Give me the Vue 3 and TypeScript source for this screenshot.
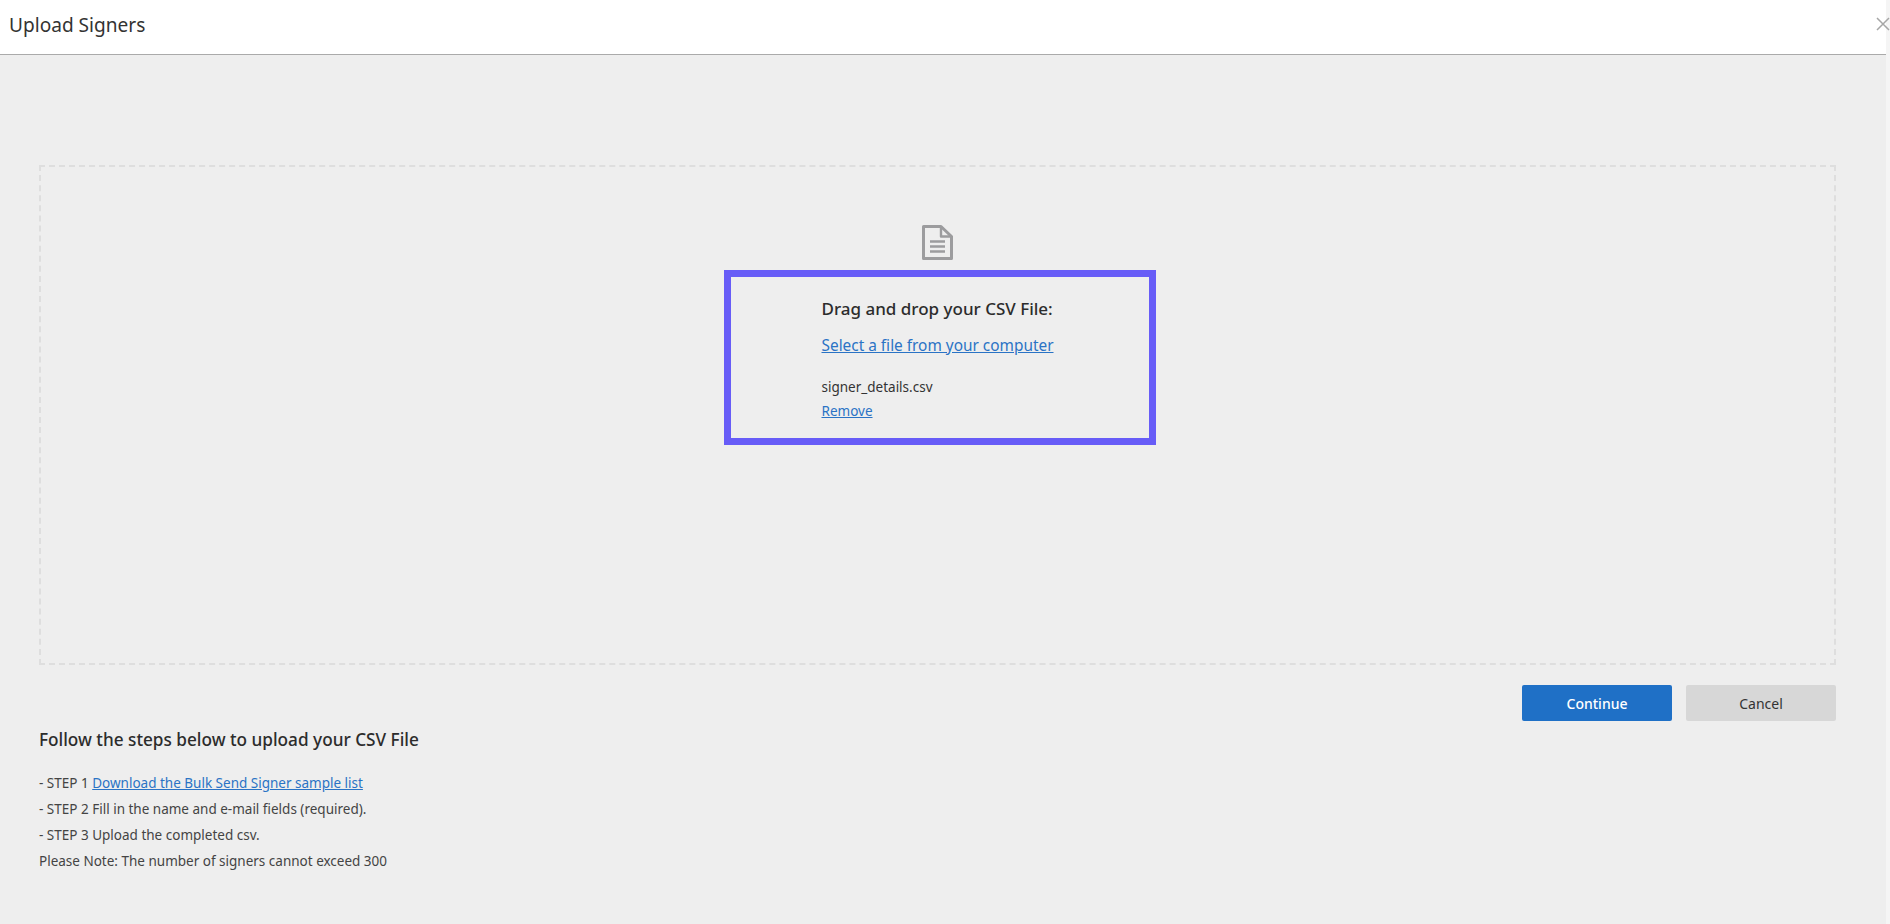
<script setup lang="ts">
const steps: string[] = [
  '- STEP 2 Fill in the name and e-mail fields (required).',
  '- STEP 3 Upload the completed csv.',
  'Please Note: The number of signers cannot exceed 300',
]
</script>

<template>
  <div class="page">
    <header class="header">
      <h1 class="title">Upload Signers</h1>
      <svg class="close" width="14" height="14" viewBox="0 0 14 14" aria-label="Close">
        <path d="M1 1 L13 13 M13 1 L1 13" stroke="#a6a6a6" stroke-width="1.5" fill="none" />
      </svg>
    </header>
    <main class="body">
      <section class="drop">
        <svg class="doc" width="32" height="36" viewBox="0 0 32 36">
          <path d="M1.5 1.5 H19 L29.5 11.5 V33.5 H1.5 Z" fill="none" stroke="#9c9c9e" stroke-width="3" stroke-linejoin="round" />
          <path d="M19 1.5 V11.5 H29.5" fill="none" stroke="#9c9c9e" stroke-width="2.4" stroke-linejoin="round" />
          <path d="M8 16.5 H23 M8 21.5 H23 M8 26.5 H23" stroke="#9c9c9e" stroke-width="2.6" fill="none" />
        </svg>
        <div class="focus">
          <div class="drag">Drag and drop your CSV File:</div>
          <a class="select" href="#">Select a file from your computer</a>
          <div class="file">signer_details.csv</div>
          <a class="remove" href="#">Remove</a>
        </div>
      </section>
      <div class="actions">
        <button class="btn primary">Continue</button>
        <button class="btn secondary">Cancel</button>
      </div>
      <section class="help">
        <h2 class="help-title">Follow the steps below to upload your CSV File</h2>
        <ul class="steps">
          <li>- STEP 1 <a href="#">Download the Bulk Send Signer sample list</a></li>
          <li v-for="s in steps" :key="s">{{ s }}</li>
        </ul>
      </section>
    </main>
  </div>
</template>

<style>
html, body { margin: 0; background: #f5f5f5; }
</style>

<style scoped>
.page {
  width: 1886px;
  height: 924px;
  display: flex;
  flex-direction: column;
  background: #eeeeee;
  font-family: "Noto Sans", sans-serif;
  color: #333;
}
.header {
  height: 54px;
  flex: none;
  background: #fff;
  border-bottom: 1px solid #aaa;
  display: flex;
  align-items: center;
  padding-left: 9px;
  position: relative;
}
.title { margin: 0 0 4px; font-size: 19.1px; font-weight: 400; line-height: 24px; color: #333; }
.close { position: absolute; left: 1876px; top: 17px; }
.body { flex: 1; padding: 110px 50px 0 39px; display: flex; flex-direction: column; }
.drop {
  height: 500px;
  box-sizing: border-box;
  border: 2px dashed #dedede;
  display: flex;
  flex-direction: column;
  align-items: center;
  padding-top: 58px;
}
.doc { display: block; }
.focus {
  margin: 9px 0 0 4px;
  box-sizing: border-box;
  width: 432px;
  height: 175px;
  border: 7px solid #675cf7;
  padding: 20px 0 0 91px;
}
.drag { font-size: 17px; font-weight: 500; line-height: 24px; color: #2c2c2c; }
.select { display: block; margin-top: 13px; font-size: 15.4px; line-height: 24px; color: #2a73c5; }
.file { margin-top: 19px; font-size: 13.5px; line-height: 20px; color: #333; }
.remove { display: block; margin-top: 4px; font-size: 13.5px; line-height: 20px; color: #2a73c5; }
.actions { display: flex; justify-content: flex-end; gap: 14px; margin-top: 20px; }
.btn {
  width: 150px;
  height: 36px;
  border: 0;
  border-radius: 2px;
  font-family: inherit;
  font-size: 14px;
  padding: 0;
}
.primary { background: #1f70c6; color: #fff; font-weight: 500; }
.secondary { background: #d7d7d7; color: #333; }
.help { margin-top: 7px; }
.help-title { margin: 0; font-size: 17.2px; font-weight: 500; line-height: 24px; color: #2c2c2c; }
.steps { list-style: none; margin: 18px 0 0; padding: 0; font-size: 13.5px; line-height: 26px; color: #444; }
.steps a { color: #2a73c5; }
</style>
